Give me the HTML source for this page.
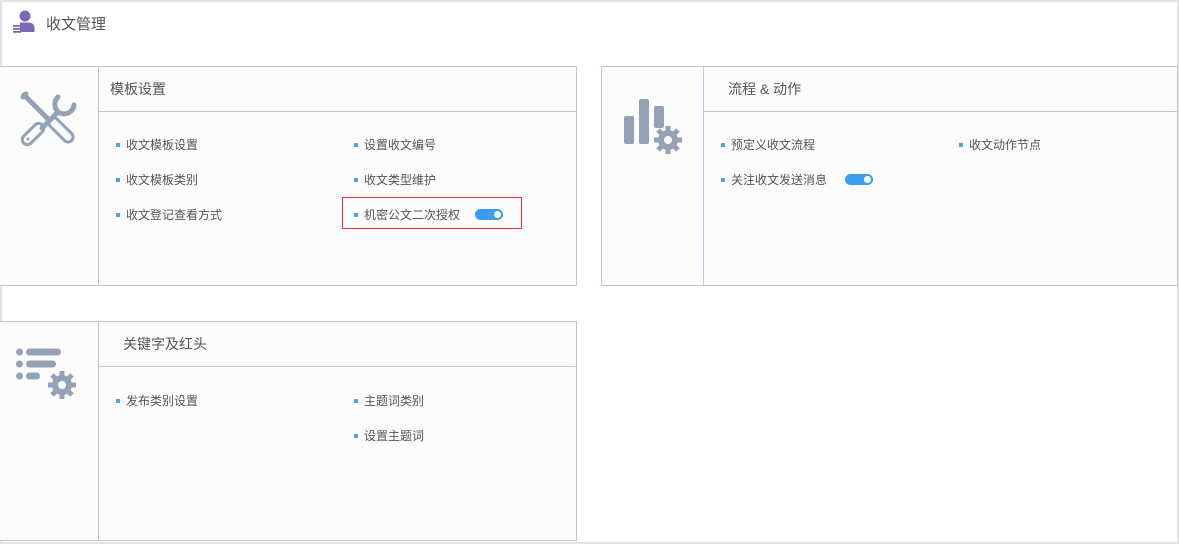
<!DOCTYPE html>
<html><head><meta charset="utf-8"><style>
*{margin:0;padding:0;box-sizing:border-box}
body{width:1179px;height:544px;background:#e3e3e3;font-family:"Liberation Sans","Noto Sans CJK SC",sans-serif;position:relative;overflow:hidden}
.page{position:absolute;left:2px;top:2px;width:1175px;height:540px;background:#fff}
.title{position:absolute;left:44px;top:11px;font-size:15px;color:#555}
.panel{position:absolute;background:#fcfcfd;border:1px solid #b6c8db;border-left:none;height:220px}
.ic{position:absolute;left:0;top:0;width:99px;height:218px;border-right:1px solid #b6c8db}
.hd{position:absolute;left:99px;top:0;right:0;height:45px;border-bottom:1px solid #b6c8db;font-size:14px;color:#555;padding:12px 0 0 24px}
.it{position:absolute;font-size:12px;color:#555;white-space:nowrap}
.it:before{content:"";position:absolute;left:-10px;top:7px;width:4px;height:4px;background:#4aa3ea}
.tg{display:inline-block;width:28px;height:11px;border-radius:6px;background:#3a9df0;position:relative;vertical-align:-1px;margin-left:15px}
.tg:after{content:"";position:absolute;right:2px;top:2px;width:7px;height:7px;border-radius:50%;background:#fff}
</style></head><body>
<div class="page">
<svg style="position:absolute;left:10px;top:8px" width="24" height="24" viewBox="0 0 24 24"><circle cx="13" cy="6" r="5.5" fill="#7a68b8"/><path d="M8 12.5h9a5.5 5.5 0 0 1 5.5 5.5v4H8z" fill="#7a68b8"/><rect x="1" y="15" width="8" height="1.8" fill="#7a68b8"/><rect x="1" y="18" width="8" height="1.8" fill="#7a68b8"/><rect x="1" y="21" width="8" height="1.8" fill="#7a68b8"/></svg>
<div class="title">收文管理</div>
</div>

<div class="panel" style="left:0;top:66px;width:577px">
<div class="ic"><svg style="position:absolute;left:18px;top:22px" width="62" height="62" viewBox="0 0 62 62" fill="none" stroke="#93a2b5" stroke-linecap="round" stroke-linejoin="round">
<path d="M5 8l3-3M6 6l24 24" stroke-width="5"/>
<rect x="28" y="36" width="30" height="10" rx="5" transform="rotate(45 43 41)" stroke-width="3"/>
<path d="M40 8a10 10 0 0 0 2 16a10 10 0 0 0 14-8" stroke-width="5"/>
<path d="M40 23L24 39" stroke-width="5"/>
<rect x="2" y="40" width="26" height="10" rx="5" transform="rotate(-45 15 45)" stroke-width="3"/>
<circle cx="10" cy="50" r="1.5" fill="#93a2b5" stroke="none"/>
</svg></div>
<div class="hd" style="padding-left:11px">模板设置</div>
<div class="it" style="left:126px;top:69px">收文模板设置</div>
<div class="it" style="left:364px;top:69px">设置收文编号</div>
<div class="it" style="left:126px;top:104px">收文模板类别</div>
<div class="it" style="left:364px;top:104px">收文类型维护</div>
<div class="it" style="left:126px;top:139px">收文登记查看方式</div>
<div class="it" style="left:364px;top:139px">机密公文二次授权<span class="tg"></span></div>
<div style="position:absolute;left:342px;top:130px;width:180px;height:32px;border:1px solid #e83535"></div>
</div>

<div class="panel" style="left:601px;top:66px;width:577px;border-left:1px solid #b6c8db">
<div class="ic" style="width:102px"><svg style="position:absolute;left:20px;top:25px" width="62" height="62" viewBox="0 0 62 62" fill="#93a2b5"><rect x="2" y="24" width="10" height="28" rx="2"/><rect x="17" y="7" width="10" height="45" rx="2"/><rect x="32" y="14" width="10" height="22" rx="2"/><g transform="translate(46,48)"><circle r="10"/><g stroke="#93a2b5" stroke-width="5"><path d="M0-14V14M-14 0H14M-10-10L10 10M-10 10L10-10"/></g><circle r="4" fill="#fcfcfd"/></g></svg></div>
<div class="hd" style="left:102px">流程 &amp; 动作</div>
<div class="it" style="left:129px;top:69px">预定义收文流程</div>
<div class="it" style="left:367px;top:69px">收文动作节点</div>
<div class="it" style="left:129px;top:104px">关注收文发送消息<span class="tg" style="margin-left:18px"></span></div>
</div>

<div class="panel" style="left:0;top:321px;width:577px">
<div class="ic"><svg style="position:absolute;left:16px;top:25px" width="64" height="52" viewBox="0 0 64 52" fill="#93a2b5"><circle cx="3.5" cy="5" r="3.5"/><rect x="10" y="1.5" width="35" height="7" rx="3.5"/><circle cx="3.5" cy="17" r="3.5"/><rect x="10" y="13.5" width="30" height="7" rx="3.5"/><circle cx="3.5" cy="29" r="3.5"/><rect x="10" y="25.5" width="14" height="7" rx="3.5"/><g transform="translate(46,38)"><circle r="10"/><g stroke="#93a2b5" stroke-width="5"><path d="M0-14V14M-14 0H14M-10-10L10 10M-10 10L10-10"/></g><circle r="4" fill="#fcfcfd"/></g></svg></div>
<div class="hd" style="padding-left:24px">关键字及红头</div>
<div class="it" style="left:126px;top:70px">发布类别设置</div>
<div class="it" style="left:364px;top:70px">主题词类别</div>
<div class="it" style="left:364px;top:105px">设置主题词</div>
</div>
</body></html>
